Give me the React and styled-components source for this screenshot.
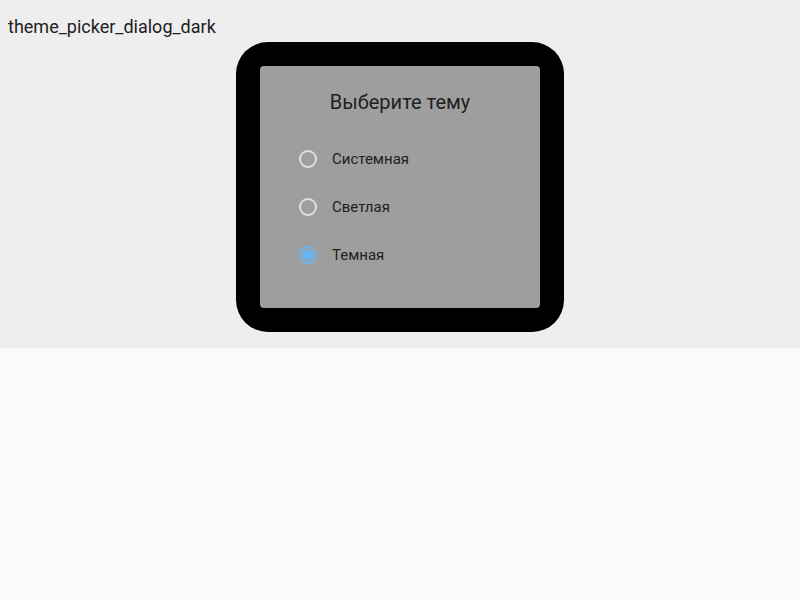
import styled, { createGlobalStyle } from "styled-components"

const GlobalStyle = createGlobalStyle`
  html, body {
    margin: 0;
    padding: 0;
    background: #fafafa;
    font-family: Roboto, "Noto Sans", sans-serif;
  }
`

const Preview = styled.section`
  height: 348px;
  box-sizing: border-box;
  background: #eeeeee;
  padding: 15px 8px 0;
  display: flex;
  flex-direction: column;
`

const Label = styled.div`
  font-size: 18px;
  line-height: 24px;
  color: #212121;
`

const Frame = styled.div`
  align-self: center;
  margin-top: 3px;
  width: 328px;
  box-sizing: border-box;
  padding: 24px;
  background: #000;
  border-radius: 32px;
`

const Dialog = styled.div`
  background: #9e9e9e;
  border-radius: 4px;
  padding: 24px 0 29px;
  display: flex;
  flex-direction: column;
`

const Title = styled.h2`
  margin: 0 0 21px;
  font-size: 20px;
  font-weight: 400;
  line-height: 24px;
  text-align: center;
  color: #212121;
`

const Option = styled.label`
  height: 48px;
  display: flex;
  align-items: center;
  gap: 15px;
  padding-left: 39px;
  font-size: 15px;
  color: #212121;
  cursor: pointer;
`

const Radio = styled.span`
  width: 18px;
  height: 18px;
  box-sizing: border-box;
  border-radius: 50%;
  border: 2px solid ${p => (p.$checked ? "#64b5f6" : "#e0e0e0")};
  display: flex;
  align-items: center;
  justify-content: center;

  &::after {
    content: "";
    width: 10px;
    height: 10px;
    border-radius: 50%;
    background: #64b5f6;
    display: ${p => (p.$checked ? "block" : "none")};
  }
`

const options = ["Системная", "Светлая", "Темная"]

const App = () => {
  const selected = "Темная"
  return (
    <>
      <GlobalStyle />
      <Preview>
        <Label>theme_picker_dialog_dark</Label>
        <Frame>
          <Dialog>
            <Title>Выберите тему</Title>
            {options.map(o => (
              <Option key={o}>
                <Radio $checked={o === selected} />
                {o}
              </Option>
            ))}
          </Dialog>
        </Frame>
      </Preview>
    </>
  )
}

export default App
